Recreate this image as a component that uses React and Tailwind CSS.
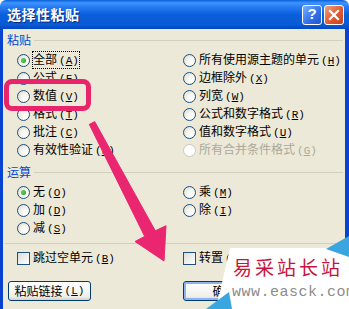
import React from 'react';

const cjk = "font-['Noto_Sans_CJK_SC','Noto_Sans',sans-serif]";

function Key({ k }) {
    return (
        <span className="ml-[2px] font-['Liberation_Mono',monospace] text-[11px]">
            (<span className="underline underline-offset-[1px]">{k}</span>)
        </span>
    );
}

function Radio({ label, k, checked, disabled, focus }) {
    return (
        <div className="h-[18px] flex items-center">
            <span
                className={
                    disabled
                        ? 'w-[13px] h-[13px] rounded-full border border-[#cac8bb] bg-white shrink-0'
                        : 'w-[13px] h-[13px] rounded-full border border-[#1c5180] bg-[radial-gradient(circle_at_70%_70%,#ffffff_0%,#f4f4f0_45%,#d6d5cc_100%)] shrink-0 flex items-center justify-center'
                }
            >
                {checked && <span className="w-[5px] h-[5px] rounded-full bg-[radial-gradient(circle_at_40%_40%,#5fd35f,#1b9a1b)]" />}
            </span>
            <span
                className={
                    'ml-[3px] text-[12px] leading-[14px] whitespace-nowrap ' +
                    (disabled ? 'text-[#aca899] ' : 'text-black ') +
                    (focus ? 'outline outline-1 outline-dotted outline-black' : '')
                }
            >
                {label}
                <Key k={k} />
            </span>
        </div>
    );
}

function Check({ label, k }) {
    return (
        <div className="h-[18px] flex items-center">
            <span className="w-[13px] h-[13px] border border-[#1c5180] bg-[linear-gradient(135deg,#dcdcd7,#ffffff)] shrink-0" />
            <span className="ml-[3px] text-[12px] leading-[14px] whitespace-nowrap">
                {label}
                {k && <Key k={k} />}
            </span>
        </div>
    );
}

function Heading({ text }) {
    return (
        <div className="h-[18px] flex items-center pl-[4px] pr-[2px]">
            <span className="text-[12px] text-[#0046d5]">{text}</span>
            <div className="flex-1 ml-[3px] border-t border-[#d0d0bf]" />
        </div>
    );
}

export default function App() {
    return (
        <div className={'w-[349px] h-[309px] relative overflow-hidden bg-white ' + cjk}>
            {/* title bar */}
            <div className="h-[29px] rounded-t-[6px] flex items-center bg-[linear-gradient(to_bottom,#0a5fd8_0%,#3d95ff_10%,#2a7ef4_22%,#0b5fdc_50%,#0a5ad5_85%,#0047c4_100%)]">
                <span className="ml-[7px] text-[14px] font-bold text-white [text-shadow:1px_1px_0_#0a2a7a] tracking-[0.5px]">选择性粘贴</span>
                <div className="ml-auto mr-[5px] flex gap-[2px]">
                    <div className="w-[20px] h-[20px] rounded-[3px] border border-white bg-[linear-gradient(135deg,#7ab0ff,#2f6ee8_60%,#2258d0)] flex items-center justify-center text-white font-bold text-[15px] font-['Liberation_Sans',sans-serif]">?</div>
                    <div className="w-[20px] h-[20px] rounded-[3px] border border-white bg-[linear-gradient(135deg,#f2a080,#e05a30_55%,#c8401c)] flex items-center justify-center">
                        <svg width="12" height="12" viewBox="0 0 12 12">
                            <path d="M2 2 L10 10 M10 2 L2 10" stroke="white" strokeWidth="2.2" strokeLinecap="square" />
                        </svg>
                    </div>
                </div>
            </div>

            {/* body */}
            <div className="flex h-[280px]">
                <div className="w-[3px] bg-[#0842d0]" />
                <div className="flex-1 bg-[#ece9d8] flex flex-col pt-[2px]">
                    <Heading text="粘贴" />
                    <div className="mt-[2px] grid grid-cols-[166px_1fr] pl-[14px]">
                        <div>
                            <Radio label="全部" k="A" checked focus />
                            <Radio label="公式" k="F" />
                            <Radio label="数值" k="V" />
                            <Radio label="格式" k="T" />
                            <Radio label="批注" k="C" />
                            <Radio label="有效性验证" k="N" />
                        </div>
                        <div>
                            <Radio label="所有使用源主题的单元" k="H" />
                            <Radio label="边框除外" k="X" />
                            <Radio label="列宽" k="W" />
                            <Radio label="公式和数字格式" k="R" />
                            <Radio label="值和数字格式" k="U" />
                            <Radio label="所有合并条件格式" k="G" disabled />
                        </div>
                    </div>

                    <div className="mt-[4px]">
                        <Heading text="运算" />
                    </div>
                    <div className="mt-[2px] grid grid-cols-[166px_1fr] pl-[14px]">
                        <div>
                            <Radio label="无" k="O" checked />
                            <Radio label="加" k="D" />
                            <Radio label="减" k="S" />
                        </div>
                        <div>
                            <Radio label="乘" k="M" />
                            <Radio label="除" k="I" />
                        </div>
                    </div>

                    <div className="mt-[6px] mx-[2px] border-t border-[#d0d0bf]" />

                    <div className="mt-[5px] grid grid-cols-[166px_1fr] pl-[14px]">
                        <Check label="跳过空单元" k="B" />
                        <Check label="转置" k="E" />
                    </div>

                    <div className="mt-[14px] flex pl-[5px]">
                        <button className="w-[83px] h-[20px] rounded-[3px] border border-[#003c74] bg-[linear-gradient(to_bottom,#ffffff,#f0f0ea_80%,#d6d0c5)] text-[12px] leading-[14px] flex items-center justify-center whitespace-nowrap">
                            粘贴链接<Key k="L" />
                        </button>
                        <button className="ml-[92px] w-[83px] h-[20px] rounded-[3px] border border-[#003c74] bg-[linear-gradient(to_bottom,#ffffff,#f0f0ea_80%,#d6d0c5)] shadow-[inset_0_0_0_2px_#8fb3ef] text-[12px] leading-[14px] flex items-center justify-center">
                            确定
                        </button>
                    </div>
                </div>
                <div className="w-[4px] bg-[#0842d0]" />
            </div>

            {/* highlight box */}
            <div className="absolute left-[4px] top-[79px] w-[87px] h-[32px] rounded-[8px] border-[5px] border-[#e8246a]" />

            {/* arrow */}
            <svg className="absolute left-0 top-0" width="349" height="309" viewBox="0 0 349 309">
                <polygon
                    points="94.7,121.6 155.3,230.8 166,225.7 164,261 135,241.5 144.7,236.4 89.3,124.4"
                    fill="#ea2670"
                    stroke="#ea2670"
                    strokeWidth="1"
                    strokeLinejoin="round"
                />
            </svg>

            {/* watermark */}
            <svg className="absolute left-0 top-0" width="349" height="309" viewBox="0 0 349 309">
                <polygon points="230,248 349,248 349,309 216,309" fill="#ffffff" />
                <polygon points="326,249 349,236 349,257" fill="#3aa6e0" />
                <polygon points="206,309 229,292 232,309" fill="#3aa6e0" />
            </svg>
            <div className="absolute left-[233px] top-[256px] text-[19px] leading-[22px] tracking-[3px] text-[#c8143a] whitespace-nowrap">易采站长站</div>
            <div className="absolute left-[232px] top-[284px] text-[15px] leading-[18px] tracking-[0.5px] text-[#8c8c8c] whitespace-nowrap font-['Liberation_Mono',monospace]">www.easck.com</div>
        </div>
    );
}
